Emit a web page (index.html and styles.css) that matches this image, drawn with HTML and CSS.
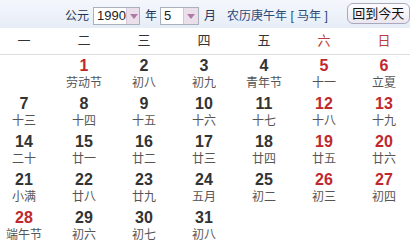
FILE: index.html
```html
<!DOCTYPE html>
<html>
<head>
<meta charset="utf-8">
<link rel="stylesheet" href="styles.css">
</head>
<body>
<div class="header">
  <span class="lbl">公元</span>
  <div class="sel sel-year"><span class="val">1990</span><span class="arr"></span></div>
  <span class="lbl">年</span>
  <div class="sel sel-month"><span class="val">5</span><span class="arr"></span></div>
  <span class="lbl">月</span>
  <span class="lunar-year">农历庚午年 [ 马年 ]</span>
  <div class="btn">回到今天</div>
</div>
<div class="weekdays">
  <div>一</div><div>二</div><div>三</div><div>四</div><div>五</div><div class="we">六</div><div class="we">日</div>
</div>
<div class="days">
  <div class="cell"></div>
  <div class="cell red"><b>1</b><span>劳动节</span></div>
  <div class="cell"><b>2</b><span>初八</span></div>
  <div class="cell"><b>3</b><span>初九</span></div>
  <div class="cell"><b>4</b><span>青年节</span></div>
  <div class="cell red"><b>5</b><span>十一</span></div>
  <div class="cell red"><b>6</b><span>立夏</span></div>

  <div class="cell"><b>7</b><span>十三</span></div>
  <div class="cell"><b>8</b><span>十四</span></div>
  <div class="cell"><b>9</b><span>十五</span></div>
  <div class="cell"><b>10</b><span>十六</span></div>
  <div class="cell"><b>11</b><span>十七</span></div>
  <div class="cell red"><b>12</b><span>十八</span></div>
  <div class="cell red"><b>13</b><span>十九</span></div>

  <div class="cell"><b>14</b><span>二十</span></div>
  <div class="cell"><b>15</b><span>廿一</span></div>
  <div class="cell"><b>16</b><span>廿二</span></div>
  <div class="cell"><b>17</b><span>廿三</span></div>
  <div class="cell"><b>18</b><span>廿四</span></div>
  <div class="cell red"><b>19</b><span>廿五</span></div>
  <div class="cell red"><b>20</b><span>廿六</span></div>

  <div class="cell"><b>21</b><span>小满</span></div>
  <div class="cell"><b>22</b><span>廿八</span></div>
  <div class="cell"><b>23</b><span>廿九</span></div>
  <div class="cell"><b>24</b><span>五月</span></div>
  <div class="cell"><b>25</b><span>初二</span></div>
  <div class="cell red"><b>26</b><span>初三</span></div>
  <div class="cell red"><b>27</b><span>初四</span></div>

  <div class="cell red"><b>28</b><span>端午节</span></div>
  <div class="cell"><b>29</b><span>初六</span></div>
  <div class="cell"><b>30</b><span>初七</span></div>
  <div class="cell"><b>31</b><span>初八</span></div>
</div>
</body>
</html>
```

FILE: styles.css
```css
html, body {
  margin: 0;
  padding: 0;
  background: #fff;
  overflow: hidden;
}
body {
  font-family: "Liberation Sans", "Noto Sans CJK SC", sans-serif;
  color: #333;
  width: 410px;
}
.header {
  height: 28px;
  display: flex;
  align-items: center;
  background: linear-gradient(#f4f7fc, #e7edf7);
  padding-left: 65px;
  font-size: 12px;
  color: #1f3556;
}
.lbl {
  margin-right: 4px;
}
.sel {
  display: flex;
  height: 18px;
  box-sizing: border-box;
  border: 1px solid #a9b1bd;
  background: #fff;
  margin-top: 4px;
  margin-right: 5px;
}
.sel-year { width: 47px; }
.sel-month { width: 39px; margin-left: -1px; }
.sel .val {
  flex: 1;
  font-size: 13px;
  line-height: 16px;
  padding-left: 3px;
  color: #222;
}
.sel .arr {
  width: 14px;
  background: #ecdfec;
  border-left: 1px solid #d6c6d8;
  position: relative;
}
.sel .arr::after {
  content: "";
  position: absolute;
  left: 3px;
  top: 6px;
  border-left: 4px solid transparent;
  border-right: 4px solid transparent;
  border-top: 5px solid #b07aa6;
}
.lunar-year {
  margin-left: 7px;
  margin-right: 19px;
  color: #2a4a78;
}
.btn {
  width: 63px;
  height: 21px;
  box-sizing: border-box;
  border: 1px solid #a9a9bb;
  border-radius: 6px;
  background: linear-gradient(#fdfdff, #ebe6f1);
  font-size: 13px;
  line-height: 19px;
  text-align: center;
  color: #111;
  margin-top: -1px;
}
.weekdays {
  display: grid;
  grid-template-columns: repeat(7, 60px);
  margin-left: -6px;
  height: 26px;
  border-bottom: 1px solid #dedede;
  font-size: 13px;
  line-height: 26px;
  text-align: center;
  color: #333;
}
.weekdays .we {
  color: #c0393b;
}
.days {
  display: grid;
  grid-template-columns: repeat(7, 60px);
  grid-auto-rows: 38px;
  margin-left: -6px;
}
.cell {
  display: flex;
  flex-direction: column;
  align-items: center;
  padding-top: 2px;
}
.cell b {
  font-size: 16px;
  line-height: 18px;
  font-weight: bold;
  color: #333;
}
.cell span {
  font-size: 12px;
  line-height: 16px;
  color: #555;
}
.cell.red b {
  color: #c0282d;
}
```
